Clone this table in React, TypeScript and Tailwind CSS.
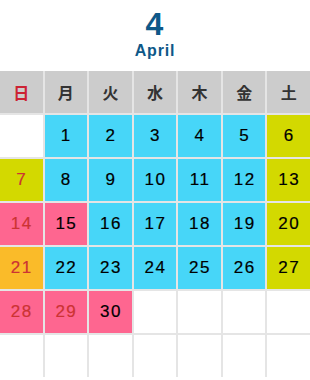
export default function App() {
  const weekdays = ["日", "月", "火", "水", "木", "金", "土"]

  const cells: { day?: number; bg: string; red?: boolean }[] = [
    { bg: "bg-white" },
    ...[1, 2, 3, 4, 5].map((d) => ({ day: d, bg: "bg-[#47d6f8]" })),
    { day: 6, bg: "bg-[#d3d900]" },
    { day: 7, bg: "bg-[#d3d900]", red: true },
    ...[8, 9, 10, 11, 12].map((d) => ({ day: d, bg: "bg-[#47d6f8]" })),
    { day: 13, bg: "bg-[#d3d900]" },
    { day: 14, bg: "bg-[#fe6690]", red: true },
    { day: 15, bg: "bg-[#fe6690]" },
    ...[16, 17, 18, 19].map((d) => ({ day: d, bg: "bg-[#47d6f8]" })),
    { day: 20, bg: "bg-[#d3d900]" },
    { day: 21, bg: "bg-[#fabb29]", red: true },
    ...[22, 23, 24, 25, 26].map((d) => ({ day: d, bg: "bg-[#47d6f8]" })),
    { day: 27, bg: "bg-[#d3d900]" },
    { day: 28, bg: "bg-[#fe6690]", red: true },
    { day: 29, bg: "bg-[#fe6690]", red: true },
    { day: 30, bg: "bg-[#fe6690]" },
    ...Array.from({ length: 11 }, () => ({ bg: "bg-white" })),
  ]

  return (
    <div className="w-[310px] h-[380px] overflow-hidden bg-white font-['Liberation_Sans',Arial,sans-serif]">
      <div className="flex flex-col items-center pt-[7px] h-[71px]">
        <div className="text-[32px] leading-[34px] font-bold text-[#0e5888] tracking-[1px]">4</div>
        <div className="text-[16px] leading-[18px] font-bold text-[#0e5888] tracking-[0.8px] mt-[1px]">April</div>
      </div>
      <div className="grid grid-cols-7 gap-[2px] bg-[#e5e5e5]">
        {weekdays.map((w, i) => (
          <div
            key={w}
            className={`h-[42px] flex items-center justify-center bg-[#cccccc] text-[16px] font-bold font-['Noto_Sans_CJK_JP',sans-serif] ${
              i === 0 ? "text-[#cc2233]" : "text-[#333333]"
            }`}
          >
            {w}
          </div>
        ))}
        {cells.map((c, i) => (
          <div
            key={i}
            className={`h-[42px] flex items-center justify-center text-[17px] tracking-[1.5px] pl-[1px] [-webkit-text-stroke:0.2px_currentColor] ${c.bg} ${
              c.red ? "text-[#cc3333]" : "text-black"
            }`}
          >
            {c.day}
          </div>
        ))}
      </div>
    </div>
  )
}
